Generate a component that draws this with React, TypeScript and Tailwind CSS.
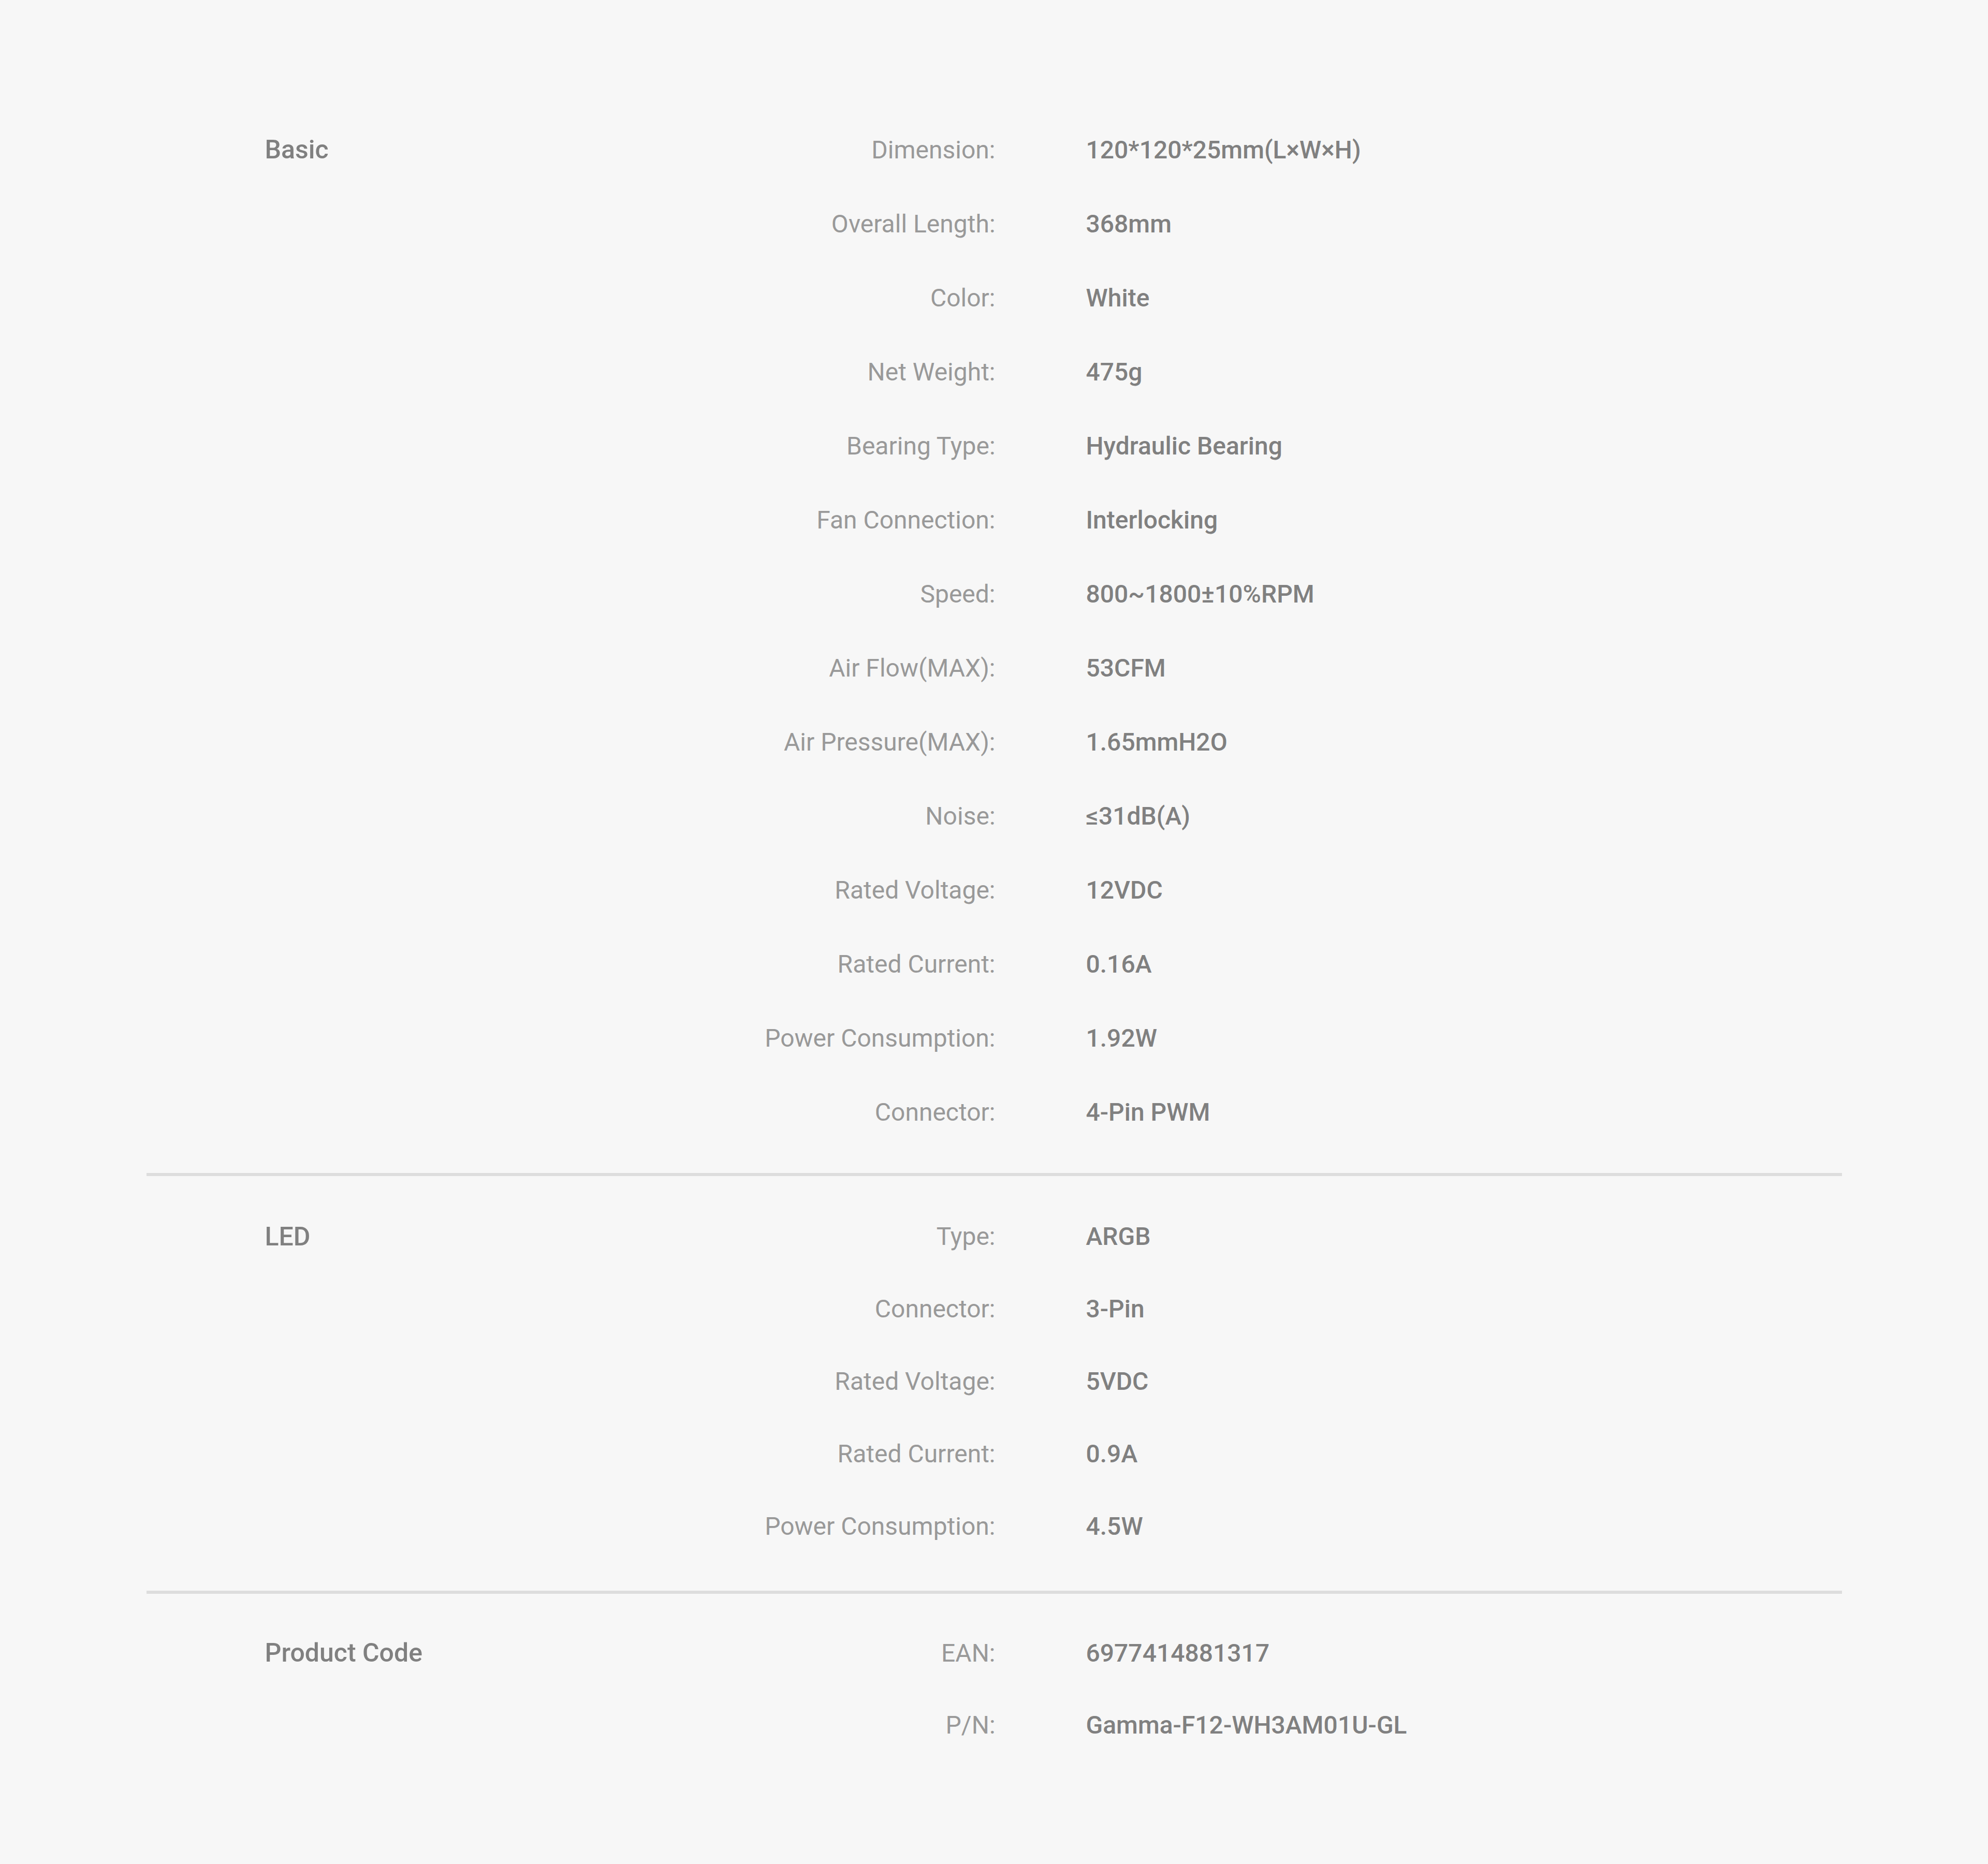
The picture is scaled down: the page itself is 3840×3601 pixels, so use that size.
import React from 'react';

type Spec = { label: string; value: string };

type Section = {
  title: string;
  rowClass: string;
  padClass: string;
  specs: Spec[];
};

const sections: Section[] = [
  {
    title: 'Basic',
    rowClass: 'h-[143px] leading-[143px]',
    padClass: 'pb-[46px]',
    specs: [
      { label: 'Dimension:', value: '120*120*25mm(L×W×H)' },
      { label: 'Overall Length:', value: '368mm' },
      { label: 'Color:', value: 'White' },
      { label: 'Net Weight:', value: '475g' },
      { label: 'Bearing Type:', value: 'Hydraulic Bearing' },
      { label: 'Fan Connection:', value: 'Interlocking' },
      { label: 'Speed:', value: '800~1800±10%RPM' },
      { label: 'Air Flow(MAX):', value: '53CFM' },
      { label: 'Air Pressure(MAX):', value: '1.65mmH2O' },
      { label: 'Noise:', value: '≤31dB(A)' },
      { label: 'Rated Voltage:', value: '12VDC' },
      { label: 'Rated Current:', value: '0.16A' },
      { label: 'Power Consumption:', value: '1.92W' },
      { label: 'Connector:', value: '4-Pin PWM' },
    ],
  },
  {
    title: 'LED',
    rowClass: 'h-[140px] leading-[140px]',
    padClass: 'pt-[47px] pb-[54px]',
    specs: [
      { label: 'Type:', value: 'ARGB' },
      { label: 'Connector:', value: '3-Pin' },
      { label: 'Rated Voltage:', value: '5VDC' },
      { label: 'Rated Current:', value: '0.9A' },
      { label: 'Power Consumption:', value: '4.5W' },
    ],
  },
  {
    title: 'Product Code',
    rowClass: 'h-[139px] leading-[139px]',
    padClass: 'pt-[45px]',
    specs: [
      { label: 'EAN:', value: '6977414881317' },
      { label: 'P/N:', value: 'Gamma-F12-WH3AM01U-GL' },
    ],
  },
];

const SpecSection: React.FC<{ section: Section }> = ({ section }) => {
  return (
    <div className={`flex pl-[229px] ${section.padClass}`}>
      <div className={`w-[671px] shrink-0 text-[50px] font-medium text-[#808080] ${section.rowClass}`}>
        {section.title}
      </div>
      <div className="flex flex-col">
        {section.specs.map((s, i) => (
          <div key={i} className={`flex text-[48px] ${section.rowClass}`}>
            <div className="w-[740px] shrink-0 text-right text-[#999999]">{s.label}</div>
            <div className="ml-[175px] whitespace-nowrap font-medium text-[#808080]">{s.value}</div>
          </div>
        ))}
      </div>
    </div>
  );
};

export default function App() {
  return (
    <div className="min-h-[3601px] w-full bg-[#f7f7f7] pt-[218px] pb-[199px] font-['Roboto',sans-serif]">
      <div className="mx-auto w-[3275px]">
        {sections.map((section, i) => (
          <React.Fragment key={section.title}>
            {i > 0 && <div className="h-[6px] bg-[#dddddd]" />}
            <SpecSection section={section} />
          </React.Fragment>
        ))}
      </div>
    </div>
  );
}
